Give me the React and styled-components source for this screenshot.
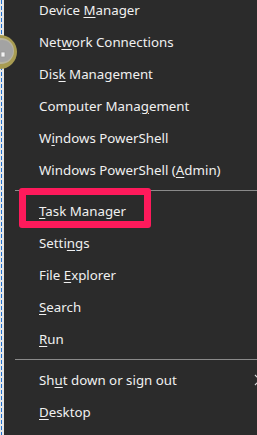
import React from "react";
import styled, { createGlobalStyle } from "styled-components";

const GlobalStyle = createGlobalStyle`
  html, body {
    margin: 0;
    padding: 0;
    background: #2b2b2b;
  }
  * {
    box-sizing: border-box;
  }
`;

const Screen = styled.div`
  position: relative;
  display: flex;
  width: 257px;
  height: 435px;
  overflow: hidden;
  background: #2b2b2b;
  font-family: "Noto Sans", "Open Sans", sans-serif;
`;

const DesktopEdge = styled.div`
  width: 4px;
  flex-shrink: 0;
  background: #e6e6e6;
  display: flex;
  justify-content: center;
`;

const DashLine = styled.div`
  width: 1px;
  margin-left: -1px;
  background: repeating-linear-gradient(
    to bottom,
    #1e6fd0 0px,
    #1e6fd0 4px,
    transparent 4px,
    transparent 6px
  );
`;

const Menu = styled.div`
  flex: 1;
  display: flex;
  flex-direction: column;
  margin-top: -6px;
  overflow: hidden;
`;

const Item = styled.div`
  display: flex;
  align-items: center;
  height: 32px;
  padding-left: 35px;
  color: #f0f0f0;
  font-size: 13.3px;
  white-space: nowrap;
`;

const Label = styled.span`
  white-space: pre;
`;

const Key = styled.span`
  text-decoration: underline;
  text-underline-offset: 2px;
`;

const Separator = styled.div`
  height: 1px;
  margin: 4px 0 4px 11px;
  background: #8a8a8a;
`;

const Chevron = styled.svg`
  margin-left: auto;
  margin-right: -5px;
  flex-shrink: 0;
`;

const Highlight = styled.div`
  position: absolute;
  left: 19px;
  top: 188px;
  width: 132px;
  height: 40px;
  border: 7px solid #fe1a5b;
  border-radius: 3px;
`;

const Blob = styled.svg`
  position: absolute;
  left: 0;
  top: 32px;
`;

const items = [
  ["Device ", "M", "anager"],
  ["Net", "w", "ork Connections"],
  ["Dis", "k", " Management"],
  ["Computer Mana", "g", "ement"],
  ["W", "i", "ndows PowerShell"],
  ["Windows PowerShell (", "A", "dmin)"],
  "sep",
  ["", "T", "ask Manager"],
  ["Setti", "n", "gs"],
  ["File ", "E", "xplorer"],
  ["", "S", "earch"],
  ["", "R", "un"],
  "sep",
  ["Sh", "u", "t down or sign out", true],
  ["", "D", "esktop"],
];

export default function App() {
  return (
    <>
      <GlobalStyle />
      <Screen>
        <DesktopEdge>
          <DashLine />
        </DesktopEdge>
        <Menu>
          {items.map((it, i) =>
            it === "sep" ? (
              <Separator key={i} />
            ) : (
              <Item key={i}>
                <Label>
                  {it[0]}
                  <Key>{it[1]}</Key>
                  {it[2]}
                </Label>
                {it[3] && (
                  <Chevron width="8" height="12" viewBox="0 0 8 12">
                    <path d="M1 1 L6 6 L1 11" fill="none" stroke="#d8d8d8" strokeWidth="1.2" />
                  </Chevron>
                )}
              </Item>
            )
          )}
        </Menu>
        <Blob width="20" height="40" viewBox="0 0 20 40">
          <circle cx="0" cy="20" r="17" fill="#a89c52" />
          <circle cx="1" cy="19" r="13" fill="#b9b5a0" />
          <circle cx="2" cy="19" r="11" fill="#a3a3a3" />
          <rect x="1" y="20" width="4" height="5" fill="#f2f2f2" stroke="#999" strokeWidth="0.8" />
        </Blob>
        <Highlight />
      </Screen>
    </>
  );
}
